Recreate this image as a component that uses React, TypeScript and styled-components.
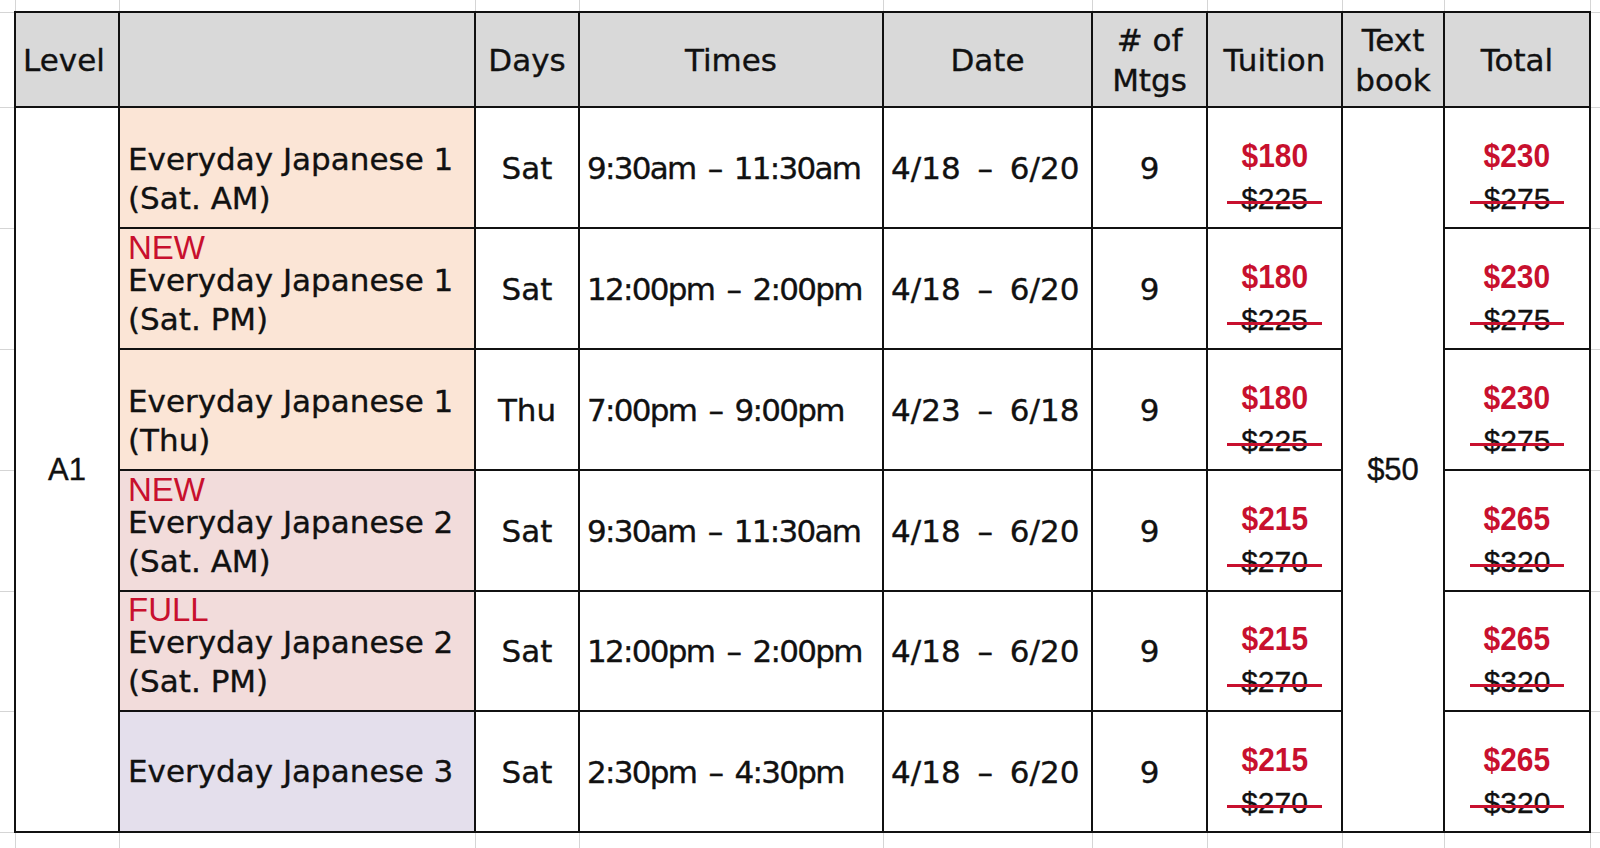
import React from 'react';
import styled, { createGlobalStyle } from 'styled-components';

const COLS = [104, 356, 104, 304, 209, 115, 135, 102, 146];
const ROWS = [95, 121, 121, 121, 121, 120, 121];
const LINE = '#111';
const GRIDLINE = '#d5d5d5';
const RED = '#c8102e';

const vLines: number[] = [15];
{
  let x = 16;
  COLS.forEach((w) => {
    x += w;
    vLines.push(x - 1);
  });
}
const hLines: number[] = [12];
{
  let y = 13;
  ROWS.forEach((h) => {
    y += h;
    hLines.push(y - 1);
  });
}
const gridBackground = [
  ...vLines.map((x) => `linear-gradient(${GRIDLINE}, ${GRIDLINE}) ${x}px 0 / 1px 100% no-repeat`),
  ...hLines.map((y) => `linear-gradient(${GRIDLINE}, ${GRIDLINE}) 0 ${y}px / 100% 1px no-repeat`),
].join(', ');

const GlobalStyle = createGlobalStyle`
  html, body { margin: 0; padding: 0; background: #fff; }
  * { box-sizing: border-box; }
`;

const Page = styled.div`
  width: 1600px;
  height: 848px;
  overflow: hidden;
  padding: 11px 0 0 14px;
  background: ${gridBackground}, #fff;
`;

const Sheet = styled.div`
  display: grid;
  width: max-content;
  grid-template-columns: ${COLS.map((w) => `${w}px`).join(' ')};
  grid-template-rows: ${ROWS.map((h) => `${h}px`).join(' ')};
  border-left: 2px solid ${LINE};
  border-top: 2px solid ${LINE};
  background: #fff;
`;

const Cell = styled.div`
  display: flex;
  min-width: 0;
  border-right: 2px solid ${LINE};
  border-bottom: 2px solid ${LINE};
  color: #111;
  font-family: 'DejaVu Sans', 'Noto Sans CJK JP', sans-serif;
  font-size: 31px;
  white-space: nowrap;
  -webkit-text-stroke: 0.35px currentColor;
`;

const HeadCell = styled(Cell)<{ $left?: boolean }>`
  flex-direction: column;
  justify-content: center;
  align-items: ${(p) => (p.$left ? 'flex-start' : 'center')};
  padding: 0 ${(p) => (p.$left ? '7px' : '0')};
  background: #d9d9d9;
  line-height: 40px;
`;

const SpanCell = styled(Cell)`
  grid-row: span 6;
  align-items: center;
  justify-content: center;
  font-family: 'Liberation Sans', Arial, sans-serif;
`;

const TONES = {
  peach: '#fbe5d6',
  rose: '#f2dcdb',
  lilac: '#e4dfec',
} as const;
type Tone = keyof typeof TONES;

const NameCell = styled(Cell)<{ $tone: Tone; $middle?: boolean }>`
  flex-direction: column;
  align-items: flex-start;
  justify-content: ${(p) => (p.$middle ? 'center' : 'flex-end')};
  padding: 0 8px ${(p) => (p.$middle ? '0' : '9px')};
  background: ${(p) => TONES[p.$tone]};
  line-height: 39px;
`;

const Tag = styled.span`
  color: ${RED};
  font-family: 'Liberation Sans', Arial, sans-serif;
  font-size: 33px;
  line-height: 26px;
  -webkit-text-stroke: 0;
`;

const TextCell = styled(Cell)<{ $left?: boolean; $track?: number; $gap?: number }>`
  align-items: center;
  justify-content: ${(p) => (p.$left ? 'flex-start' : 'center')};
  padding: 0 7px;
  letter-spacing: ${(p) => p.$track ?? 0}px;
  word-spacing: ${(p) => p.$gap ?? 0}px;
`;

const PriceCell = styled(Cell)`
  flex-direction: column;
  align-items: center;
  justify-content: flex-end;
  padding-bottom: 6px;
`;

const Sale = styled.span`
  display: inline-block;
  color: ${RED};
  font-family: 'Liberation Sans', Arial, sans-serif;
  font-weight: 700;
  font-size: 34px;
  line-height: 44px;
  transform: scaleX(0.88);
  -webkit-text-stroke: 0;
`;

const Was = styled.span`
  position: relative;
  display: inline-block;
  color: #111;
  font-family: 'Liberation Sans', Arial, sans-serif;
  font-size: 30px;
  line-height: 44px;

  &::after {
    content: '';
    position: absolute;
    left: -14px;
    right: -14px;
    top: calc(50% + 2px);
    height: 3px;
    background: ${RED};
  }
`;

type Course = {
  tone: Tone;
  tag?: string;
  name: string[];
  day: string;
  time: string;
  date: string;
  mtgs: number;
  tuition: [string, string];
  total: [string, string];
};

const courses: Course[] = [
  { tone: 'peach', name: ['Everyday Japanese 1', '(Sat. AM)'], day: 'Sat', time: '9:30am – 11:30am', date: '4/18 – 6/20', mtgs: 9, tuition: ['$180', '$225'], total: ['$230', '$275'] },
  { tone: 'peach', tag: 'NEW', name: ['Everyday Japanese 1', '(Sat. PM)'], day: 'Sat', time: '12:00pm – 2:00pm', date: '4/18 – 6/20', mtgs: 9, tuition: ['$180', '$225'], total: ['$230', '$275'] },
  { tone: 'peach', name: ['Everyday Japanese 1', '(Thu)'], day: 'Thu', time: '7:00pm – 9:00pm', date: '4/23 – 6/18', mtgs: 9, tuition: ['$180', '$225'], total: ['$230', '$275'] },
  { tone: 'rose', tag: 'NEW', name: ['Everyday Japanese 2', '(Sat. AM)'], day: 'Sat', time: '9:30am – 11:30am', date: '4/18 – 6/20', mtgs: 9, tuition: ['$215', '$270'], total: ['$265', '$320'] },
  { tone: 'rose', tag: 'FULL', name: ['Everyday Japanese 2', '(Sat. PM)'], day: 'Sat', time: '12:00pm – 2:00pm', date: '4/18 – 6/20', mtgs: 9, tuition: ['$215', '$270'], total: ['$265', '$320'] },
  { tone: 'lilac', name: ['Everyday Japanese 3'], day: 'Sat', time: '2:30pm – 4:30pm', date: '4/18 – 6/20', mtgs: 9, tuition: ['$215', '$270'], total: ['$265', '$320'] },
];

const headers: { lines: string[]; left?: boolean }[] = [
  { lines: ['Level'], left: true },
  { lines: [''] },
  { lines: ['Days'] },
  { lines: ['Times'] },
  { lines: ['Date'] },
  { lines: ['# of', 'Mtgs'] },
  { lines: ['Tuition'] },
  { lines: ['Text', 'book'] },
  { lines: ['Total'] },
];

const Price = ({ pair }: { pair: [string, string] }) => (
  <PriceCell>
    <Sale>{pair[0]}</Sale>
    <Was>{pair[1]}</Was>
  </PriceCell>
);

export default function App() {
  return (
    <Page>
      <GlobalStyle />
      <Sheet>
        {headers.map((h, i) => (
          <HeadCell key={`h${i}`} $left={h.left}>
            {h.lines.map((l, j) => (
              <span key={j}>{l}</span>
            ))}
          </HeadCell>
        ))}
        {courses.map((c, i) => (
          <React.Fragment key={i}>
            {i === 0 && <SpanCell>A1</SpanCell>}
            <NameCell $tone={c.tone} $middle={c.name.length === 1 && !c.tag}>
              {c.tag && <Tag>{c.tag}</Tag>}
              {c.name.map((n, j) => (
                <span key={j}>{n}</span>
              ))}
            </NameCell>
            <TextCell>{c.day}</TextCell>
            <TextCell $left $track={-1.7} $gap={4}>{c.time}</TextCell>
            <TextCell $left $track={0} $gap={7}>{c.date}</TextCell>
            <TextCell>{c.mtgs}</TextCell>
            <Price pair={c.tuition} />
            {i === 0 && <SpanCell>$50</SpanCell>}
            <Price pair={c.total} />
          </React.Fragment>
        ))}
      </Sheet>
    </Page>
  );
}
